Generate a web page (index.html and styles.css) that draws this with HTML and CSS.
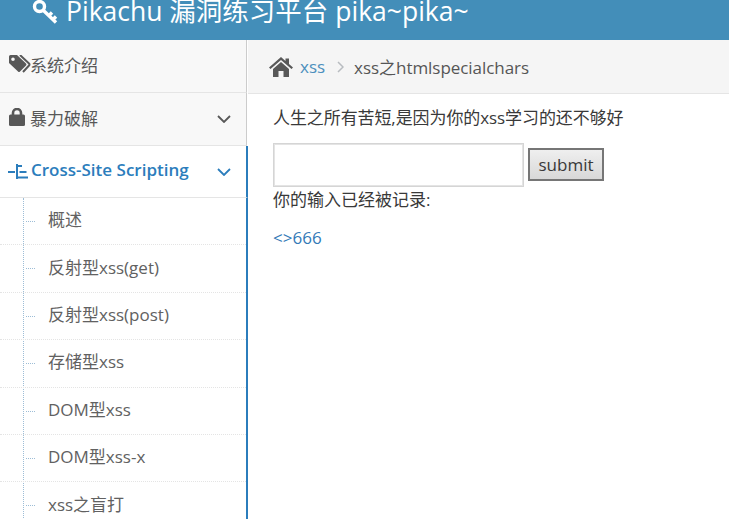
FILE: index.html
```html
<!DOCTYPE html>
<html lang="en">
<head>
    <meta charset="UTF-8">
    <title>Pikachu</title>
    <link rel="stylesheet" href="styles.css">
</head>
<body>
    <!-- Top bar -->
    <div class="navbar">
        <svg class="key-icon" viewBox="0 0 26 24" width="26" height="24">
            <circle cx="7.500" cy="6.500" r="5" fill="none" stroke="#fff" stroke-width="3.400"/>
            <path d="M11.500 10.500 L24 22.500 M17 15.500 L20 12.500 M21 19.500 L24 16.500" fill="none" stroke="#fff" stroke-width="3.400"/>
        </svg>
        <span class="brand">Pikachu 漏洞练习平台 pika~pika~</span>
    </div>

    <div class="container">
        <!-- Left Side: Menu -->
        <div class="sidebar">
            <div class="nav-item">
                <svg class="nav-icon" viewBox="0 0 22 18" width="22" height="18">
                    <path d="M0 1.500 Q0 0 1.500 0 H8 L17 8.500 Q18 9.500 17 10.500 L11 16.500 Q10 17.500 9 16.500 L0 8 Z M4 2.500 A1.800 1.800 0 1 0 4 6.100 A1.800 1.800 0 1 0 4 2.500 Z" fill="#585858" fill-rule="evenodd"/>
                    <path d="M11 0 L20 8.500 Q21 9.500 20 10.500 L14 17" fill="none" stroke="#585858" stroke-width="2"/>
                </svg>
                <span class="nav-label tight">系统介绍</span>
            </div>
            <div class="nav-item">
                <svg class="nav-icon" viewBox="0 0 22 18" width="22" height="18">
                    <path d="M4 8 V5 A4 4 0 0 1 12 5 V8" fill="none" stroke="#585858" stroke-width="2.600"/>
                    <rect x="0" y="6.500" width="16" height="11.500" rx="1.500" fill="#585858"/>
                </svg>
                <span class="nav-label tight">暴力破解</span>
                <svg class="arrow" viewBox="0 0 14 8" width="14" height="8"><path d="M1 1 L7 7 L13 1" fill="none" stroke="#585858" stroke-width="1.800"/></svg>
            </div>
            <div class="nav-item active">
                <svg class="nav-icon" viewBox="0 0 23 18" width="23" height="18">
                    <path d="M0 11 H7 M9 3 V18 M9 5 H14 M11.500 11 H18.500 M9 16.500 H20" fill="none" stroke="#2b7dbc" stroke-width="2"/>
                </svg>
                <span class="nav-label">Cross-Site Scripting</span>
                <svg class="arrow" viewBox="0 0 14 8" width="14" height="8"><path d="M1 1 L7 7 L13 1" fill="none" stroke="#2b7dbc" stroke-width="1.800"/></svg>
            </div>
            <ul class="submenu">
                <li>概述</li>
                <li>反射型xss(get)</li>
                <li>反射型xss(post)</li>
                <li>存储型xss</li>
                <li>DOM型xss</li>
                <li>DOM型xss-x</li>
                <li>xss之盲打</li>
            </ul>
        </div>

        <!-- Right Side: Content -->
        <div class="main">
            <div class="breadcrumbs">
                <svg class="home-icon" viewBox="0 0 24 20" width="24" height="20">
                    <path d="M12 0 L16.500 4 V1.500 H20 V7 L24 10.500 L22.500 12 L12 3 L1.500 12 L0 10.500 Z M4 12 L12 5 L20 12 V20 H14.500 V14 H9.500 V20 H4 Z" fill="#585858"/>
                </svg>
                <a class="crumb-link">xss</a>
                <svg class="crumb-sep" viewBox="0 0 7 12" width="7" height="12"><path d="M1 1 L6 6 L1 11" fill="none" stroke="#b8bcc0" stroke-width="1.500"/></svg>
                <span class="crumb-current">xss之htmlspecialchars</span>
            </div>
            <div class="content">
                <p class="title">人生之所有苦短,是因为你的xss学习的还不够好</p>
                <form class="xss-form">
                    <input type="text">
                    <button type="button">submit</button>
                </form>
                <p class="notice">你的输入已经被记录:</p>
                <a class="result">&lt;&gt;666</a>
            </div>
        </div>
    </div>
</body>
</html>
```

FILE: styles.css
```css
*, *::before, *::after {
    box-sizing: border-box;
}

html, body {
    height: 519px;
    overflow: hidden;
}

body {
    margin: 0;
    font-family: "Open Sans", "Noto Sans CJK SC", sans-serif;
    font-size: 17px;
    color: #393939;
    background: #fff;
}

/* Top bar */
.navbar {
    height: 40px;
    background: #438eb9;
    color: #fff;
    display: flex;
    align-items: flex-start;
    padding-left: 32px;
    overflow: hidden;
}

.key-icon {
    flex-shrink: 0;
}

.brand {
    font-size: 26.500px;
    line-height: 26px;
    margin-left: 8px;
    margin-top: -2px;
    white-space: nowrap;
}

.container {
    display: flex;
    height: 479px;
}

/* Menu */
.sidebar {
    width: 248px;
    flex-shrink: 0;
    overflow: hidden;
}

.nav-item {
    width: 247px;
    height: 53px;
    display: flex;
    align-items: center;
    padding-left: 9px;
    padding-bottom: 4px;
    background: #f8f8f8;
    border-bottom: 1px solid #e5e5e5;
    border-right: 1px solid #ccc;
    color: #585858;
}

.nav-item.active {
    width: 248px;
    height: 52px;
    background: #fff;
    color: #2b7dbc;
    font-weight: 600;
    padding-left: 8px;
    border-right: 2px solid #2b7dbc;
}

.nav-icon {
    flex-shrink: 0;
}

.nav-label.tight {
    margin-left: -1px;
}

.arrow {
    margin-left: auto;
    margin-right: 15px;
    position: relative;
    top: 2px;
}

.submenu {
    list-style: none;
    margin: 0;
    padding: 0;
    position: relative;
    border-right: 2px solid #2b7dbc;
}

.submenu::before {
    content: "";
    position: absolute;
    left: 23px;
    top: 0;
    bottom: 0;
    border-left: 1px dotted #9dbdd6;
}

.submenu li {
    height: 47.400px;
    display: flex;
    align-items: center;
    padding-left: 48px;
    padding-bottom: 5px;
    color: #616161;
    border-bottom: 1px dotted #e4e4e4;
    position: relative;
}

.submenu li::before {
    content: "";
    position: absolute;
    left: 26px;
    top: 23px;
    width: 9px;
    border-top: 1px dotted #9dbdd6;
}

/* Breadcrumbs */
.main {
    flex: 1;
    min-width: 0;
}

.breadcrumbs {
    height: 54px;
    display: flex;
    align-items: center;
    padding-left: 21px;
    background: #f5f5f5;
    border-bottom: 1px solid #e5e5e5;
    color: #555;
}

.crumb-link {
    margin-left: 7px;
    color: #4c8fbd;
}

.crumb-sep {
    margin-left: 12px;
    margin-right: 10px;
}

.crumb-current {
    letter-spacing: -0.050px;
}

/* Content */
.content {
    padding: 10px 25px 0;
}

.title, .notice {
    margin: 0;
    line-height: 26px;
}

.title {
    letter-spacing: -0.090px;
    position: relative;
    top: 1px;
}

.xss-form {
    display: flex;
    align-items: flex-end;
    margin-top: 13px;
}

.xss-form input {
    width: 251px;
    height: 44px;
    border: 1px solid #d5d5d5;
    outline: 1px solid #e4e4e4;
    outline-offset: -2px;
    background: #fff;
}

.xss-form button {
    width: 76px;
    height: 33px;
    margin-left: 4px;
    margin-bottom: 6px;
    font: inherit;
    color: #393939;
    border: 2px solid #767676;
    background: linear-gradient(#efefef, #d8d8d8);
    padding: 0;
}

.result {
    display: block;
    margin-top: 12px;
    line-height: 26px;
    color: #337ab7;
}
```
